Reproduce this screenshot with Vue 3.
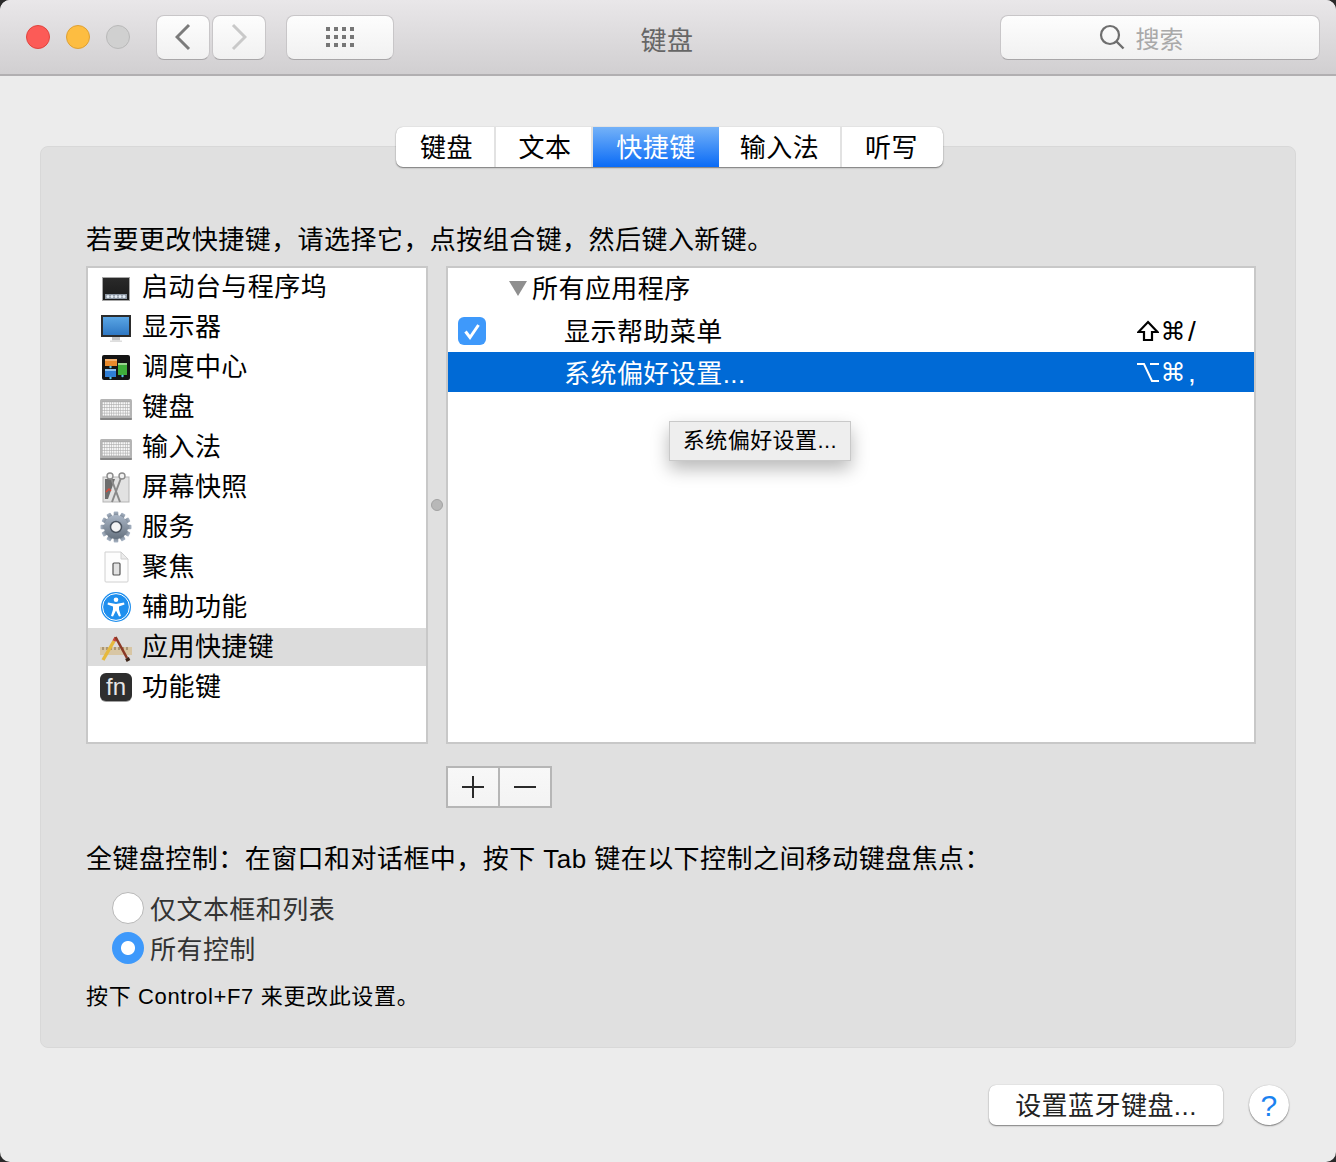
<script setup>
const tabs = [
  { label: '键盘', width: 100 },
  { label: '文本', width: 97 },
  { label: '快捷键', width: 126, active: true },
  { label: '输入法', width: 123 },
  { label: '听写', width: 101 }
]
const categories = [
  { key: 'launchpad', label: '启动台与程序坞' },
  { key: 'display', label: '显示器' },
  { key: 'mission', label: '调度中心' },
  { key: 'keyboard', label: '键盘' },
  { key: 'keyboard', label: '输入法' },
  { key: 'screenshot', label: '屏幕快照' },
  { key: 'gear', label: '服务' },
  { key: 'doc', label: '聚焦' },
  { key: 'access', label: '辅助功能' },
  { key: 'app', label: '应用快捷键', selected: true },
  { key: 'fn', label: '功能键' }
]
const gridDots = []
for (let r = 0; r < 3; r++) for (let c = 0; c < 4; c++) gridDots.push({ x: c * 8, y: r * 8 })
const keys = []
for (let r = 0; r < 5; r++) for (let c = 0; c < 12; c++) keys.push({ x: 2.6 + c * 2.3, y: 11.2 + r * 2.8 })
const gearTeeth = Array.from({ length: 12 }, (_, i) => i * 30)
</script>

<template>
  <div class="window">
    <header class="titlebar">
      <div class="bar-left">
        <div class="lights">
          <span class="light red"></span>
          <span class="light yellow"></span>
          <span class="light gray"></span>
        </div>
        <div class="nav">
          <button class="tbtn nav-btn">
            <svg width="16" height="28" viewBox="0 0 16 28"><path d="M14 2 L2 14 L14 26" fill="none" stroke="#7b7b7b" stroke-width="3"/></svg>
          </button>
          <button class="tbtn nav-btn">
            <svg width="16" height="28" viewBox="0 0 16 28"><path d="M2 2 L14 14 L2 26" fill="none" stroke="#c9c9c9" stroke-width="3"/></svg>
          </button>
        </div>
        <button class="tbtn grid-btn">
          <svg width="28" height="20" viewBox="0 0 28 20"><rect v-for="(d, i) in gridDots" :key="i" :x="d.x" :y="d.y" width="4" height="4" fill="#767676"/></svg>
        </button>
      </div>
      <div class="title">键盘</div>
      <div class="bar-right">
        <div class="tbtn search">
          <svg width="26" height="26" viewBox="0 0 26 26"><circle cx="11" cy="11" r="9" fill="none" stroke="#6e6e6e" stroke-width="2.2"/><path d="M17.5 17.5 L24.5 24.5" stroke="#6e6e6e" stroke-width="2.4"/></svg>
          <span class="search-text">搜索</span>
        </div>
      </div>
    </header>

    <main class="body">
      <section class="panel">
        <nav class="tabs">
          <div v-for="t in tabs" :key="t.label" class="tab" :class="{ active: t.active }" :style="{ width: t.width + 'px' }">{{ t.label }}</div>
        </nav>
        <p class="hint">若要更改快捷键，请选择它，点按组合键，然后键入新键。</p>
        <div class="lists">
          <ul class="cats">
            <li v-for="c in categories" :key="c.label" class="cat" :class="{ selected: c.selected }">
              <span class="cat-icon">
                <svg v-if="c.key === 'launchpad'" width="32" height="32" viewBox="0 0 32 32">
                  <defs><linearGradient id="lp" x1="0" y1="0" x2="0" y2="1"><stop offset="0" stop-color="#2a2a2a"/><stop offset="1" stop-color="#1a1a1a"/></linearGradient></defs>
                  <rect x="2" y="6" width="28" height="24" fill="#a6a6a6"/><rect x="3" y="7" width="26" height="22" fill="url(#lp)"/>
                  <rect x="5" y="23" width="22" height="5" fill="#8d97a3"/>
                  <circle v-for="x in [8, 12, 16, 20, 24]" :key="x" :cx="x" cy="25.5" r="1.5" fill="#e6edf5"/>
                </svg>
                <svg v-else-if="c.key === 'display'" width="32" height="32" viewBox="0 0 32 32">
                  <defs><linearGradient id="scr" x1="0" y1="0" x2="0" y2="1"><stop offset="0" stop-color="#5aa5e4"/><stop offset="1" stop-color="#2f78c4"/></linearGradient></defs>
                  <rect x="12" y="26" width="8" height="3.5" fill="#c4c4c4"/><rect x="10" y="29.5" width="12" height="1.5" fill="#dedede"/>
                  <rect x="1" y="4" width="30" height="22" fill="#2c2c2c"/><rect x="3" y="6" width="26" height="18" fill="url(#scr)"/>
                </svg>
                <svg v-else-if="c.key === 'mission'" width="32" height="32" viewBox="0 0 32 32">
                  <rect x="2" y="4" width="28" height="25" rx="2" fill="#141414"/>
                  <rect x="5" y="8" width="12" height="7" fill="#e88a2c"/><rect x="5" y="8" width="12" height="2" fill="#f2b170"/>
                  <rect x="5" y="18" width="11" height="8" fill="#2f7fd6"/><rect x="5" y="18" width="11" height="2" fill="#8cc0ef"/>
                  <rect x="18" y="12" width="9" height="12" fill="#3fae3a"/><rect x="18" y="12" width="9" height="2" fill="#9ad68f"/>
                  <circle cx="10.5" cy="16" r="1.2" fill="#5cc6e8"/><circle cx="10.5" cy="27" r="1.2" fill="#5cc6e8"/><circle cx="22.5" cy="25" r="1.2" fill="#5cc6e8"/>
                </svg>
                <svg v-else-if="c.key === 'keyboard'" width="32" height="32" viewBox="0 0 32 32">
                  <rect x="0" y="8" width="32" height="21" rx="1.5" fill="#b4b4b4"/><rect x="0" y="27" width="32" height="2" rx="1" fill="#868686"/>
                  <rect x="2" y="10.4" width="28" height="15" fill="#a9a9a9"/>
                  <rect v-for="(k, i) in keys" :key="i" :x="k.x" :y="k.y" width="1.8" height="2.2" fill="#f7f7f7"/>
                </svg>
                <svg v-else-if="c.key === 'screenshot'" width="32" height="32" viewBox="0 0 32 32">
                  <rect x="3" y="6" width="26" height="25" fill="#e2e2e2" stroke="#b5b5b5"/>
                  <path d="M5 8 H15 L8 28 H5 Z" fill="#6d6d6d"/><path d="M6 21 l3 -3 l2 2" stroke="#d84a3a" stroke-width="1.5" fill="none"/>
                  <path d="M11 7 L20 31 M21 7 L12 31" stroke="#8a8a8a" stroke-width="2"/>
                  <circle cx="10" cy="5" r="3" fill="#f2f2f2" stroke="#8c8c8c" stroke-width="1.4"/><circle cx="22" cy="5" r="3" fill="#f2f2f2" stroke="#8c8c8c" stroke-width="1.4"/>
                </svg>
                <svg v-else-if="c.key === 'gear'" width="32" height="32" viewBox="0 0 32 32">
                  <defs><linearGradient id="gr" x1="0" y1="0" x2="0" y2="1"><stop offset="0" stop-color="#aab6c6"/><stop offset="1" stop-color="#66727f"/></linearGradient></defs>
                  <rect v-for="a in gearTeeth" :key="a" x="13.7" y="0.5" width="4.6" height="6" rx="1" fill="url(#gr)" :transform="`rotate(${a} 16 16)`"/>
                  <circle cx="16" cy="16" r="12" fill="url(#gr)"/><circle cx="16" cy="16" r="5.5" fill="#f4f4f4" stroke="#4a5460" stroke-width="1.5"/>
                </svg>
                <svg v-else-if="c.key === 'doc'" width="32" height="32" viewBox="0 0 32 32">
                  <path d="M5 1 H21 L28 8 V30 a1 1 0 0 1 -1 1 H6 a1 1 0 0 1 -1 -1 Z" fill="#fdfdfd" stroke="#d0d0d0"/>
                  <path d="M21 1 V8 H28 Z" fill="#ececec" stroke="#d0d0d0"/>
                  <rect x="13" y="12" width="7" height="12" rx="1" fill="#e2e2e2" stroke="#555" stroke-width="1.2"/>
                </svg>
                <svg v-else-if="c.key === 'access'" width="32" height="32" viewBox="0 0 32 32">
                  <circle cx="16" cy="16" r="15" fill="#1f8fee"/><circle cx="16" cy="16" r="13.4" fill="none" stroke="#fff" stroke-width="1"/>
                  <circle cx="16" cy="8.8" r="2.3" fill="#fff"/>
                  <path d="M8 11.5 L16 13 L24 11.5 L24.5 13.5 L19 15.5 V18.5 L21 25 L19 25.6 L16 19.5 L13 25.6 L11 25 L13 18.5 V15.5 L7.5 13.5 Z" fill="#fff"/>
                </svg>
                <svg v-else-if="c.key === 'app'" width="32" height="32" viewBox="0 0 32 32">
                  <rect x="0" y="16" width="32" height="8" fill="#d8c6a4"/>
                  <path d="M3 16 v3 M7 16 v3 M11 16 v3 M15 16 v3 M19 16 v3 M23 16 v3 M27 16 v3" stroke="#7c6647" stroke-width="1"/>
                  <path d="M3 29 L14 10" stroke="#e6b93c" stroke-width="3.4"/><path d="M14 10 L16 6.5" stroke="#c9453e" stroke-width="3.4"/>
                  <path d="M27 27 L15.5 6" stroke="#8c3a26" stroke-width="2.6"/><path d="M27 27 L28.5 30" stroke="#3b2418" stroke-width="4"/>
                </svg>
                <span v-else-if="c.key === 'fn'" class="fn">fn</span>
              </span>
              <span class="cat-label">{{ c.label }}</span>
            </li>
          </ul>
          <div class="splitter"><span></span></div>
          <div class="shortcuts">
            <div class="sc-head"><span class="tri"></span><span class="head-label">所有应用程序</span></div>
            <div class="sc-row check-row">
              <span class="check">
                <svg width="28" height="28" viewBox="0 0 28 28"><path d="M7.5 14.5 L12 20.5 L20.5 8" fill="none" stroke="#fff" stroke-width="3"/></svg>
              </span>
              <span class="sc-label">显示帮助菜单</span>
              <span class="keys">
                <svg class="key-svg" width="22" height="22" viewBox="0 0 22 22"><path d="M11 2 L20.5 12 H15 V20 H7 V12 H1.5 Z" fill="none" stroke="currentColor" stroke-width="2.2"/></svg>
                <i class="k">⌘</i><b class="end">/</b>
              </span>
            </div>
            <div class="sc-row sel">
              <span class="check-gap"></span>
              <span class="sc-label">系统偏好设置...</span>
              <span class="keys">
                <svg class="key-svg" width="22" height="22" viewBox="0 0 22 22"><path d="M0 3 H7 L15 20 H22 M13 3 H22" fill="none" stroke="currentColor" stroke-width="2"/></svg>
                <i class="k">⌘</i><b class="end">,</b>
              </span>
            </div>
            <div class="tooltip">系统偏好设置...</div>
          </div>
        </div>
        <div class="pm-row">
          <div class="pm">
            <span class="pm-btn"><svg width="24" height="24" viewBox="0 0 24 24"><path d="M1 12 H23 M12 1 V23" stroke="#2a2a2a" stroke-width="2"/></svg></span>
            <span class="pm-btn"><svg width="24" height="24" viewBox="0 0 24 24"><path d="M1 12 H23" stroke="#2a2a2a" stroke-width="2"/></svg></span>
          </div>
        </div>
        <p class="full">全键盘控制：在窗口和对话框中，按下 Tab 键在以下控制之间移动键盘焦点：</p>
        <div class="radios">
          <label class="radio"><span class="dot"></span><span class="radio-text">仅文本框和列表</span></label>
          <label class="radio"><span class="dot on"></span><span class="radio-text">所有控制</span></label>
        </div>
        <p class="note">按下 Control+F7 来更改此设置。</p>
      </section>
      <footer class="foot">
        <button class="bt-btn">设置蓝牙键盘...</button>
        <button class="help">?</button>
      </footer>
    </main>
  </div>
</template>

<style>
html, body { margin: 0; background: #2a2a2a; }
</style>

<style scoped>
.window {
  width: 1336px;
  height: 1162px;
  background: #ececec;
  border-radius: 10px;
  overflow: hidden;
  font-family: "Liberation Sans", "Noto Sans CJK SC", sans-serif;
  color: #000;
  font-size: 26px;
  letter-spacing: 0.45px;
}
p { margin: 0; }
button { font: inherit; letter-spacing: inherit; padding: 0; margin: 0; color: inherit; }
ul { list-style: none; margin: 0; padding: 0; }

.titlebar {
  height: 76px;
  box-sizing: border-box;
  border-bottom: 2px solid #b1afb1;
  background: linear-gradient(#e9e7e9, #d1cfd1);
  display: grid;
  grid-template-columns: 1fr auto 1fr;
  align-items: center;
  padding: 0 16px;
}
.bar-left { display: flex; align-items: center; margin-left: 10px; }
.bar-right { display: flex; justify-content: flex-end; }
.lights { display: flex; gap: 16px; }
.light { width: 24px; height: 24px; border-radius: 50%; box-sizing: border-box; border: 1px solid; }
.red { background: #fc5b57; border-color: #e0443e; }
.yellow { background: #fdbd41; border-color: #dea034; }
.gray { background: #d0d0d0; border-color: #b9b9b9; }
.tbtn {
  height: 45px;
  box-sizing: border-box;
  border: 1px solid #c8c6c8;
  border-bottom-color: #a8a6a8;
  border-radius: 8px;
  background: linear-gradient(#fdfdfd, #f1f1f1);
  display: flex;
  align-items: center;
  justify-content: center;
}
.nav { display: flex; gap: 2px; margin-left: 26px; }
.nav-btn { width: 54px; }
.grid-btn { width: 108px; margin-left: 20px; }
.title { color: #666; line-height: 1; padding-top: 8px; margin-right: 2px; }
.search { width: 320px; gap: 11px; color: #a9a9a9; padding-right: 32px; }
.search svg { margin-left: -6px; }
.search-text { font-size: 24px; letter-spacing: 0; }

.body { padding: 70px 40px 0; }
.panel {
  box-sizing: border-box;
  background: #e0e0e0;
  border: 1px solid #d8d8d8;
  border-radius: 8px;
  padding: 0 39px 30px 45px;
}
.tabs {
  display: flex;
  width: 547px;
  height: 40px;
  margin: -20px 0 0 310px;
  box-sizing: border-box;
  background: #fff;
  border-radius: 7px;
  box-shadow: 0 1px 1.5px rgba(0, 0, 0, 0.45), 0 0 1px rgba(0, 0, 0, 0.25);
  overflow: hidden;
}
.tab {
  flex: none;
  box-sizing: border-box;
  text-align: center;
  line-height: 42px;
  border-right: 2px solid #e2e2e2;
}
.tab:nth-child(-n+2) { padding-left: 3px; }
.tab:last-child { border-right: 0; padding-right: 2px; }
.tab.active {
  color: #fff;
  border-right: 0;
  background: linear-gradient(#74b2f8, #0a6bf6);
}
.hint { margin-top: 53px; line-height: 40px; }
.lists { display: flex; height: 478px; margin-top: 6px; }
.cats {
  width: 342px;
  box-sizing: border-box;
  background: #fff;
  border: 2px solid #c8c8c8;
  display: flex;
  flex-direction: column;
  gap: 2px;
}
.cat {
  height: 38px;
  display: flex;
  align-items: center;
  gap: 10px;
  padding-left: 12px;
}
.cat-label { line-height: 34px; }
.cat.selected { background: #dcdcdc; }
.cat-icon { width: 32px; height: 32px; flex: none; display: flex; align-items: center; justify-content: center; }
.fn {
  width: 32px;
  height: 28px;
  border-radius: 6px;
  background: #2e2e2e;
  color: #e6e6e6;
  font-size: 24px;
  line-height: 28px;
  letter-spacing: 0;
  text-align: center;
  box-shadow: 0 1px 0 #a0a0a0;
}
.splitter { width: 18px; display: flex; align-items: center; justify-content: center; }
.splitter span {
  width: 12px;
  height: 12px;
  border-radius: 50%;
  box-sizing: border-box;
  background: #b8b8b8;
  border: 1px solid #a2a2a2;
}
.shortcuts {
  position: relative;
  width: 810px;
  box-sizing: border-box;
  background: #fff;
  border: 2px solid #c8c8c8;
}
.sc-head { height: 42px; display: flex; align-items: center; padding-left: 61px; }
.head-label { line-height: 36px; }
.tri {
  width: 0;
  height: 0;
  border-left: 9px solid transparent;
  border-right: 9px solid transparent;
  border-top: 15px solid #8f8f8f;
  margin-right: 5px;
  margin-top: -2px;
}
.sc-row { display: flex; align-items: center; height: 42px; padding-left: 10px; }
.sc-row.sel { height: 40px; background: #006ad6; color: #fff; }
.check {
  width: 28px;
  height: 28px;
  border-radius: 6px;
  background: #3e99fb;
  flex: none;
}
.check svg { display: block; }
.check-gap { width: 28px; flex: none; }
.sc-label { margin-left: 78px; margin-top: 2px; width: 573px; flex: none; line-height: 36px; }
.sel .sc-label { margin-top: 4px; }
.keys { display: flex; align-items: center; }
.key-svg { flex: none; display: block; }
.k { font-family: "DejaVu Sans", sans-serif; font-style: normal; font-size: 25px; line-height: 30px; width: 28px; margin-top: 2px; text-align: center; flex: none; letter-spacing: 0; }
.end { font-weight: 400; font-size: 28px; line-height: 30px; margin-top: 2px; margin-left: 1px; }
.tooltip {
  position: absolute;
  left: 221px;
  top: 153px;
  width: 182px;
  height: 40px;
  box-sizing: border-box;
  background: #eeeeee;
  border: 1px solid #c9c9c9;
  font-size: 22px;
  line-height: 38px;
  text-align: center;
  box-shadow: 0 8px 18px rgba(0, 0, 0, 0.28);
}
.pm-row { margin-top: 22px; padding-left: 360px; }
.pm {
  display: flex;
  width: 106px;
  height: 42px;
  box-sizing: border-box;
  border: 2px solid #b6b6b6;
  background: linear-gradient(#f8f8f8, #f3f3f3);
}
.pm-btn { flex: 1; display: flex; align-items: center; justify-content: center; }
.pm-btn:first-child { border-right: 2px solid #b6b6b6; }
.full { margin-top: 31px; line-height: 40px; }
.radios { margin-top: 9px; padding-left: 26px; }
.radio { height: 40px; display: flex; align-items: center; gap: 6px; color: #333; }
.radio-text { line-height: 30px; margin-top: 4px; }
.dot {
  width: 32px;
  height: 32px;
  border-radius: 50%;
  box-sizing: border-box;
  background: #fff;
  border: 1px solid #b8b8b8;
}
.dot.on {
  border: 0;
  background: radial-gradient(circle, #fff 0 6.5px, #3e99fb 7.5px);
}
.note { margin-top: 9px; line-height: 40px; font-size: 22px; letter-spacing: 0.65px; }
.foot {
  display: flex;
  justify-content: flex-end;
  align-items: center;
  gap: 26px;
  margin-top: 37px;
  padding-right: 7px;
}
.bt-btn {
  width: 234px;
  height: 40px;
  background: #fff;
  border: 0;
  border-radius: 7px;
  color: #222;
  line-height: 36px;
  padding-top: 2px;
  box-shadow: 0 1px 1.5px rgba(0, 0, 0, 0.45), 0 0 1px rgba(0, 0, 0, 0.25);
}
.help {
  width: 40px;
  height: 40px;
  border-radius: 50%;
  background: #fff;
  border: 0;
  color: #1a82f0;
  font-size: 30px;
  line-height: 36px;
  padding-top: 2px;
  box-shadow: 0 1px 1.5px rgba(0, 0, 0, 0.45), 0 0 1px rgba(0, 0, 0, 0.25);
}
</style>
